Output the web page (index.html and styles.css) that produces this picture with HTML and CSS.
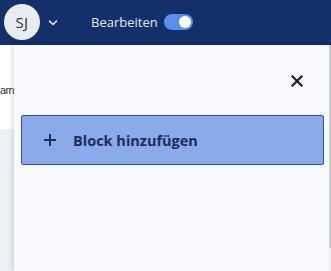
FILE: index.html
```html
<!DOCTYPE html>
<html lang="de">
<head>
<meta charset="utf-8">
<link rel="stylesheet" href="styles.css">
</head>
<body>
<header class="topbar">
  <div class="avatar">SJ</div>
  <svg class="chevron" width="10" height="6" viewBox="0 0 10 6"><path d="M1.5 1.2 L5 4.5 L8.5 1.2" fill="none" stroke="#dfe6f2" stroke-width="1.6" stroke-linecap="round" stroke-linejoin="round"/></svg>
  <span class="edit-label">Bearbeiten</span>
  <span class="toggle"><span class="knob"></span></span>
</header>
<main class="page">
  <div class="backdrop">
    <div class="back-top"><span class="back-text">arn</span></div>
    <div class="back-bottom"></div>
  </div>
  <aside class="drawer">
    <div class="drawer-head">
      <button class="close" aria-label="Schließen">
        <svg width="12" height="12" viewBox="0 0 12 12"><path d="M1.5 1.5 L10.5 10.5 M10.5 1.5 L1.5 10.5" stroke="#1f1f1f" stroke-width="2.2" stroke-linecap="square"/></svg>
      </button>
    </div>
    <button class="add-block">
      <svg class="plus" width="14" height="14" viewBox="0 0 14 14"><path d="M7 1 V13 M1 7 H13" stroke="#1a2d5c" stroke-width="2"/></svg>
      <span>Block hinzufügen</span>
    </button>
  </aside>
  <div class="scrollbar"><div class="thumb"></div></div>
</main>
</body>
</html>
```
FILE: styles.css
```css
* { box-sizing: border-box; }
html, body { margin: 0; padding: 0; }
body {
  width: 331px;
  height: 271px;
  overflow: hidden;
  font-family: "Open Sans", "Noto Sans", sans-serif;
  background: #ffffff;
}
.topbar {
  height: 45px;
  background: #13306a;
  display: flex;
  align-items: center;
  padding-left: 4px;
}
.avatar {
  width: 36px;
  height: 36px;
  border-radius: 50%;
  background: #e9edf2;
  color: #2a2f3a;
  font-size: 15px;
  display: flex;
  align-items: center;
  justify-content: center;
  letter-spacing: 0.3px;
  margin-top: -1px;
}
.chevron { margin-left: 8px; }
.edit-label {
  margin-left: 33px;
  color: #e3e9f4;
  font-size: 13px;
  margin-top: -2px;
}
.toggle {
  margin-left: 6px;
  width: 29px;
  height: 16px;
  border-radius: 8px;
  background: #5a90ea;
  display: flex;
  align-items: center;
  justify-content: flex-end;
  padding-right: 2px;
  margin-top: -1px;
}
.knob {
  width: 12px;
  height: 12px;
  border-radius: 50%;
  background: #ffffff;
}
.page {
  position: relative;
  height: 226px;
}
.backdrop {
  height: 100%;
  display: flex;
  flex-direction: column;
}
.back-top {
  height: 84px;
  background: #ffffff;
  padding-top: 39px;
}
.back-text {
  display: block;
  width: 14px;
  font-family: "Liberation Sans", sans-serif;
  font-size: 11px;
  letter-spacing: -0.7px;
  line-height: 13px;
  color: #333333;
  white-space: nowrap;
}
.back-bottom {
  flex: 1;
  background: #edf1f7;
}
.drawer {
  position: absolute;
  left: 14px;
  top: 0;
  right: 2px;
  bottom: 0;
  background: #f7f9fc;
  box-shadow: -2px 0 5px rgba(0, 0, 0, 0.13);
  padding: 0 5px 0 7px;
}
.drawer-head {
  height: 70px;
  display: flex;
  justify-content: flex-end;
  align-items: flex-start;
  padding-top: 30px;
  padding-right: 21px;
}
.close {
  border: 0;
  background: none;
  padding: 0;
  width: 12px;
  height: 12px;
  display: flex;
}
.add-block {
  width: 100%;
  height: 50px;
  background: #8aaaea;
  border: 1px solid #2d52a3;
  border-radius: 2px;
  display: flex;
  align-items: center;
  padding: 0 0 0 21px;
  font-family: inherit;
  font-size: 14.5px;
  font-weight: 700;
  color: #1a2d5c;
  cursor: pointer;
}
.add-block span { margin-left: 16px; }
.scrollbar {
  position: absolute;
  right: 0;
  top: 0;
  bottom: 0;
  width: 2px;
  background: #eceef1;
}
.thumb {
  height: 203px;
  background: #c9ccd1;
}
```
